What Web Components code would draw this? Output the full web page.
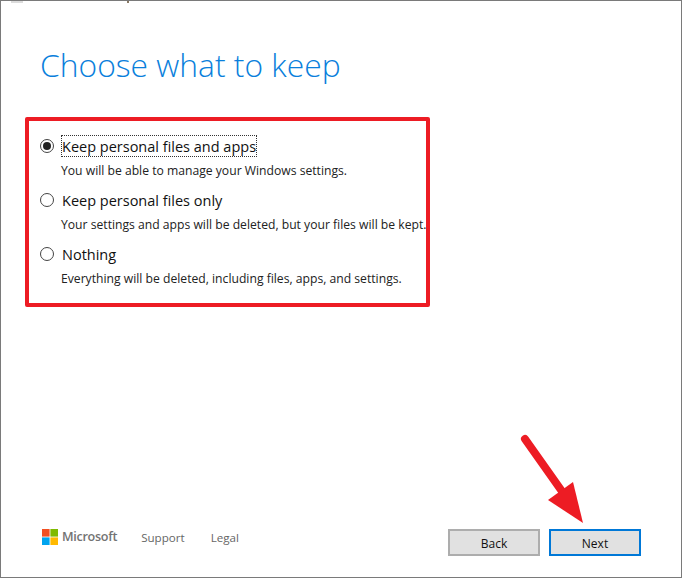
<!DOCTYPE html>
<html>
<head>
<meta charset="utf-8">
<title>Choose what to keep</title>
<style>
html, body { margin: 0; padding: 0; background: #fff; }
body { width: 682px; height: 579px; overflow: hidden; font-family: "Open Sans", "Noto Sans", sans-serif; }
</style>
</head>
<body>
<reset-dialog>
    <h-title slot="title">Choose what to keep</h-title>
    <keep-option checked focused label="Keep personal files and apps">You will be able to manage your Windows settings.</keep-option>
    <keep-option label="Keep personal files only">Your settings and apps will be deleted, but your files will be kept.</keep-option>
    <keep-option label="Nothing">Everything will be deleted, including files, apps, and settings.</keep-option>
    <ms-logo slot="footer"></ms-logo>
    <foot-link slot="footer" style="margin-left:24px">Support</foot-link>
    <foot-link slot="footer" style="margin-left:26px">Legal</foot-link>
    <wiz-button slot="actions">Back</wiz-button>
    <wiz-button slot="actions" primary>Next</wiz-button>
</reset-dialog>

<script>
class ResetDialog extends HTMLElement {
    constructor() {
        super();
        this.attachShadow({mode: 'open'});
        this.shadowRoot.innerHTML = `
<style>
:host {
    display: flex;
    flex-direction: column;
    position: relative;
    box-sizing: border-box;
    width: 682px;
    height: 578px;
    border: 1px solid #7a7a7a;
    background: #fff;
}
.title { padding: 40px 0 0 39px; height: 116px; box-sizing: border-box; }
.options {
    box-sizing: border-box;
    width: 405px;
    height: 190px;
    margin-left: 24px;
    border: 4px solid #ed1c24;
    border-radius: 2px;
    padding: 14px 0 0 11px;
    display: flex;
    flex-direction: column;
}
.footer {
    margin-top: auto;
    display: flex;
    align-items: flex-start;
    justify-content: space-between;
    padding: 0 40px 21px 41px;
}
.left, .actions { display: flex; align-items: center; }
.left { margin-top: -1px; }
.actions { gap: 9px; }
/* annotation drawn over the page */
.arrow { position: absolute; left: 514px; top: 429px; }
.mark { position: absolute; top: 0; height: 2px; }
</style>
<div class="mark" style="left:10px;width:12px;background:#dcdcdc"></div>
<div class="mark" style="left:126px;width:2px;background:#8a7a66"></div>
<div class="title"><slot name="title"></slot></div>
<div class="options"><slot></slot></div>
<div class="footer">
    <div class="left"><slot name="footer"></slot></div>
    <div class="actions"><slot name="actions"></slot></div>
</div>
<svg class="arrow" width="80" height="100" viewBox="515 430 80 100">
    <path d="M525 439L566 497" stroke="#ed1c24" stroke-width="8" stroke-linecap="round" fill="none"/>
    <path d="M573 482L583 523L548 500Z" fill="#ed1c24"/>
</svg>`;
    }
}
customElements.define('reset-dialog', ResetDialog);

class HTitle extends HTMLElement {
    constructor() {
        super();
        this.attachShadow({mode: 'open'});
        this.shadowRoot.innerHTML = `
<style>
:host { display: block; font-size: 31.8px; font-weight: 300; line-height: 48px; color: #0a7fdc; }
</style>
<slot></slot>`;
    }
}
customElements.define('h-title', HTitle);

class KeepOption extends HTMLElement {
    constructor() {
        super();
        this.attachShadow({mode: 'open'});
        const label = this.getAttribute('label');
        this.shadowRoot.innerHTML = `
<style>
:host { display: block; height: 54px; color: #111; }
.row { display: flex; align-items: flex-start; height: 24px; }
.radio {
    box-sizing: border-box;
    width: 14px; height: 14px;
    margin-top: 4px;
    border: 1px solid #444;
    border-radius: 50%;
    background: #fff;
    display: flex; align-items: center; justify-content: center;
}
.radio i { display: none; width: 8px; height: 8px; border-radius: 50%; background: #222; }
:host([checked]) .radio i { display: block; }
.label {
    margin-left: 7px;
    padding: 1px 0 0 0;
    font-size: 14.5px;
    line-height: 19px;
    border: 1px dotted transparent;
}
:host([focused]) .label { border-color: #333; }
.desc { margin: 3px 0 0 21px; font-size: 12.17px; line-height: 18px; color: #222; white-space: nowrap; }
</style>
<div class="row"><span class="radio"><i></i></span><span class="label"></span></div>
<div class="desc"><slot></slot></div>`;
        this.shadowRoot.querySelector('.label').textContent = label;
    }
}
customElements.define('keep-option', KeepOption);

class MsLogo extends HTMLElement {
    constructor() {
        super();
        this.attachShadow({mode: 'open'});
        this.shadowRoot.innerHTML = `
<style>
:host { display: inline-flex; align-items: center; gap: 4px; font-size: 12.6px; font-weight: 600; color: #737373; letter-spacing: -0.3px; }
svg { display: block; }
</style>
<svg width="16" height="16" viewBox="0 0 16 16">
    <rect width="7.6" height="7.6" fill="#f25022"/>
    <rect x="8.4" width="7.6" height="7.6" fill="#7fba00"/>
    <rect y="8.4" width="7.6" height="7.6" fill="#00a4ef"/>
    <rect x="8.4" y="8.4" width="7.6" height="7.6" fill="#ffb900"/>
</svg>
<span>Microsoft</span>`;
    }
}
customElements.define('ms-logo', MsLogo);

class FootLink extends HTMLElement {
    constructor() {
        super();
        this.attachShadow({mode: 'open'});
        this.shadowRoot.innerHTML = `
<style>
:host { display: inline-block; font-size: 11.6px; color: #666; padding-top: 1px; }
</style>
<slot></slot>`;
    }
}
customElements.define('foot-link', FootLink);

class WizButton extends HTMLElement {
    constructor() {
        super();
        this.attachShadow({mode: 'open'});
        this.shadowRoot.innerHTML = `
<style>
:host {
    display: flex; align-items: center; justify-content: center;
    box-sizing: border-box;
    width: 92px; height: 27px;
    padding-top: 1px;
    background: #e1e1e1;
    border: 2px solid #adadad;
    font-size: 12px;
    color: #111;
}
:host([primary]) { border-color: #0078d7; }
</style>
<slot></slot>`;
    }
}
customElements.define('wiz-button', WizButton);
</script>
</body>
</html>
